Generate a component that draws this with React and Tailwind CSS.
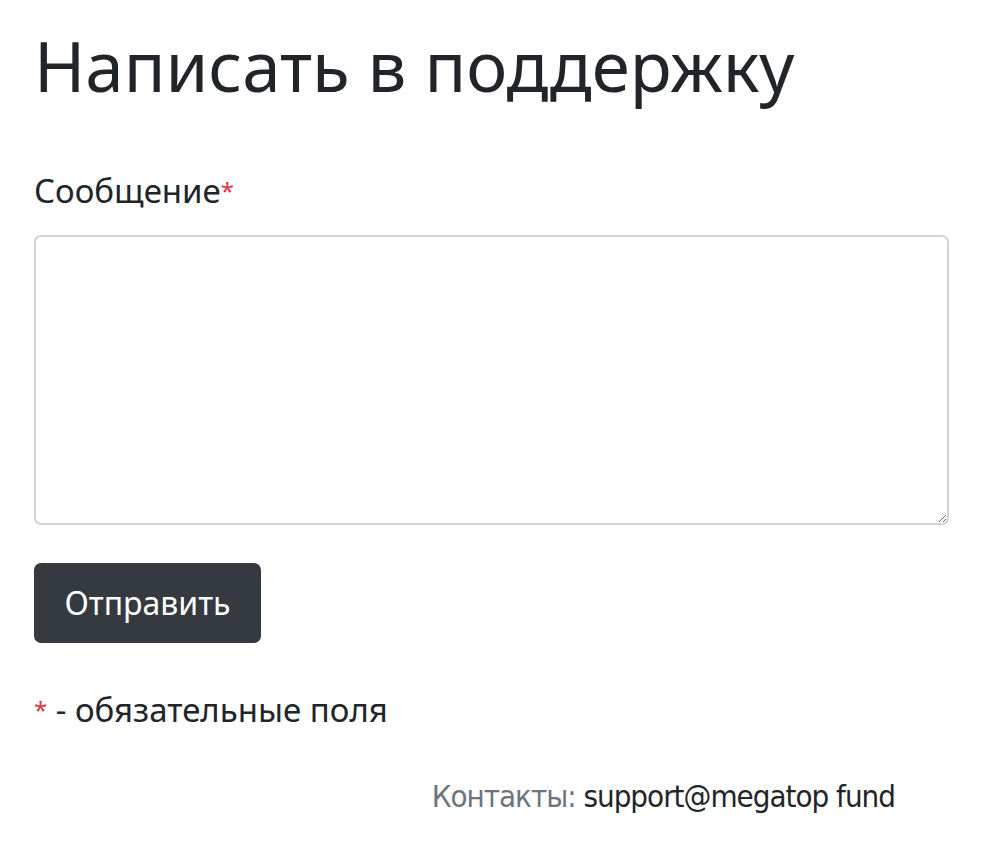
export default function App() {
  return (
    <div className="min-h-screen bg-white pl-[34px] pr-[51px] pt-[23px] font-['Noto_Sans',sans-serif] text-[#212529]">
      <h1 className="text-[69px] leading-[84px] font-normal">Написать в поддержку</h1>

      <form className="mt-[64px]" onSubmit={(e) => e.preventDefault()}>
        <label htmlFor="message" className="block text-[33px] leading-[40px]">
          Сообщение<span className="text-[#dc3545] text-[24px] align-top">*</span>
        </label>
        <textarea
          id="message"
          className="mt-[24px] block w-full h-[290px] border-2 border-[#ced4da] rounded-[7px] p-3 text-[28px] focus:outline-none"
        />

        <button
          type="submit"
          className="mt-[38px] w-[227px] h-[80px] bg-[#343a40] text-white text-[32px] rounded-[7px]"
        >
          Отправить
        </button>
      </form>

      <p className="mt-[47px] text-[33px] leading-[40px]">
        <span className="text-[#dc3545] text-[24px] align-top">*</span> - обязательные поля
      </p>

      <div className="mt-[46px] flex justify-end pr-[54px]">
        <p className="text-[31px] leading-[40px] tracking-[-1px] font-['DejaVu_Sans_Condensed','Liberation_Sans_Narrow',sans-serif]">
          <span className="text-[#6c757d]">Контакты:</span> support@megatop fund
        </p>
      </div>
    </div>
  );
}
